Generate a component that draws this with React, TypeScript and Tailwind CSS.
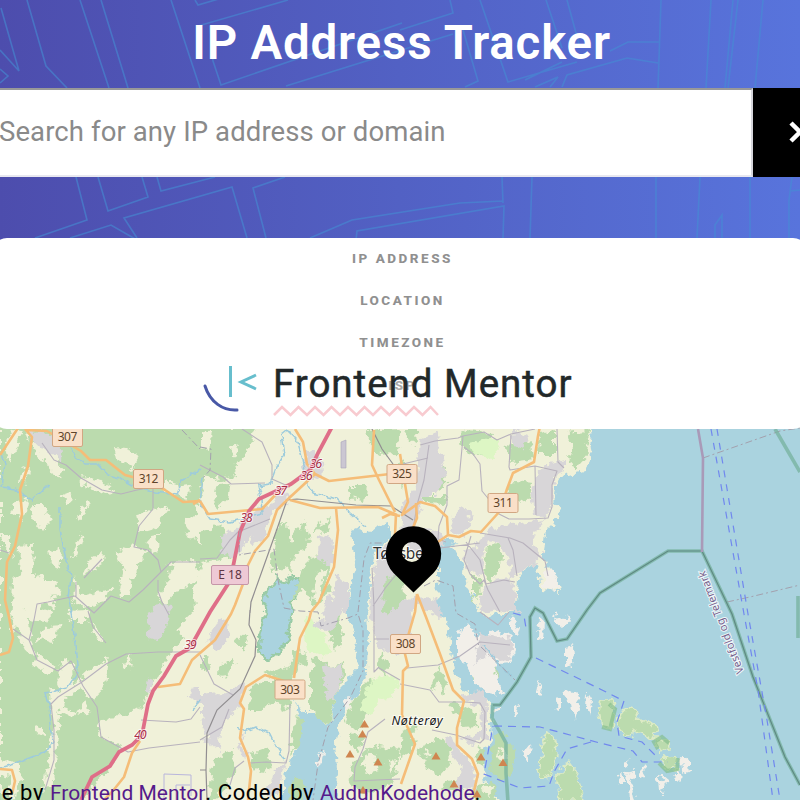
import React from "react";

const roadNumbers = [
  { t: "307", x: 67.500, y: 437 },
  { t: "312", x: 148.500, y: 479 },
  { t: "325", x: 402, y: 474 },
  { t: "311", x: 503, y: 503 },
  { t: "308", x: 405.500, y: 644 },
  { t: "303", x: 290, y: 689.500 },
];

const exits = [
  { t: "36", x: 316, y: 463.500 },
  { t: "36", x: 306.500, y: 475.500 },
  { t: "37", x: 281, y: 490.500 },
  { t: "38", x: 246.500, y: 517.500 },
  { t: "39", x: 190.500, y: 644.500 },
  { t: "40", x: 140.500, y: 734 },
];

const peaks = [
  [364.500, 724], [362.500, 734], [350, 754], [378, 762], [436, 756], [481, 757],
  [503, 762.500], [454, 784], [363, 790], [477, 794],
];

const mapFont = "font-['Noto_Sans',sans-serif]";

function HeaderLines() {
  return (
    <svg className="absolute inset-0 h-[330px] w-[800px]" viewBox="0 0 800 330" fill="none" stroke="#448fd4" strokeWidth="1.6" opacity=".58">
      <path d="M1 8L19 71L0 50M0 83L8 76L0 69M27 0L46 66L67 88M80 0L109 88M101 0L128 88M171 0L200 88M195 0L198 5L222 -2M198 26L288 0M210 26L213 61L221 85L402 23M286 86L453 34M450 0L453 13L400 30M480 0L508 82L577 62M463 30L478 81L465 87M546 0L562 48M567 0L579 44M562 62L525 80M562 87L567 75L627 58L658 63M610 51L628 42H660M661 0L658 88M711 0L706 88M733 0L725 88M738 0L728 88M763 0L755 88M535 87L558 77L550 87" />
      <path d="M76 177L87 220L35 238M98 177L108 211L148 197L142 177M157 177L161 191L215 177M70 238L111 225L137 240M137 238L124 218L232 187L247 238M266 238L253 188L285 177M310 238L352 220L460 203L503 201M356 240L357 231L504 206L503 238M502 177L503 203M532 177L530 238M656 177V238M700 177L697 238M750 177V238M792 177L789 200V238M800 190L790 191M715 238L715 225L722 215V238" />
    </svg>
  );
}

function Sea() {
  return (
    <g fill="#aad3df">
      <path d="M593 425L589 443L591 458L587 472L567 475L557 480L554 503L560 507L555 522L545 532L543 555L547 568L557 578L559 592L542 590L535 562L518 578L517 592L515 613L503 613L490 616L480 614L475 602L467 588L463 565L450 538L438 542L438 575L437 614L447 622L450 642L455 670L463 690L490 700L492 743L481 751L487 787L500 800V810H810V425Z" />
      <path d="M350 532L358 528L368 534L375 528L390 523V538L373 552L371 572L367 614L368 630L367 670L360 690L345 708L340 720L335 743L337 770L335 805H283V790L287 767L297 750L302 727L297 710L295 700L303 713L317 713L328 727L338 690L355 673L357 637L348 617V600L352 578L357 558Z" />
      <path d="M265 592L275 583L278 577L283 582L290 577L300 580L298 590L292 605L291 620L287 643L275 655L268 661L260 655L259 640L265 615L263 600Z" stroke="#9acba6" strokeWidth="3" />
      <path d="M41 465L55 478L62 492L60 505L52 500L47 487ZM133 657L145 655L153 661L144 665ZM83 490L101 499L91 496Z" />
    </g>
  );
}

function Land() {
  return (
    <>
      <g fill="#bbdbae">
        <path d="M0 425H222L230 435L245 432L249 450L234 465L236 476L220 480L205 475L199 500L192 523L215 545L229 540L230 557L203 562L193 590L195 610L176 630L185 637L169 656L154 680L146 704L122 718L98 720L101 736L122 746L109 770L97 779L79 804H0Z" />
        <path d="M218 430L255 427L248 449L234 467L218 453ZM217 484L230 483L227 500L217 509L214 497ZM198 532L226 525L229 550L204 560ZM276 529L287 521L289 544L305 521L309 540L302 552L292 556L290 574L282 567L270 572L274 548ZM312 531L331 518L329 532ZM310 557L334 552L326 580L333 590L315 606L302 588L290 605L303 570ZM350 486H366L364 502L351 498ZM365 430L400 428L397 454L376 455ZM392 478L402 461L409 468L403 488ZM424 496H447L445 505L424 504ZM436 464L446 468L445 486L436 491ZM404 429H416L417 446L409 442ZM464 430L493 432L483 457L468 455L459 443ZM507 444L532 441L534 459L511 462ZM507 492L516 480L532 482L530 499L518 502ZM539 433L555 430V454H538ZM566 432L590 430L585 448L589 455L574 472L569 459L573 448ZM487 546L502 542L500 566L490 581L484 572ZM473 577L482 577L480 593L473 602Z" />
        <path d="M314 658L331 666L344 662L345 674L338 691L333 707L328 726L310 708V680ZM264 673L293 666L292 651L300 646L296 674L285 682ZM250 686L264 681H285L291 711L273 702L260 712H249ZM296 715L303 722L300 746L290 755ZM294 776L304 782L302 800H287ZM248 755L266 748L272 762L266 776L251 768ZM213 760L235 748L234 775L216 799H208ZM367 682L377 678L371 707L359 730L345 722L351 704ZM349 734L360 733L365 740L358 751L350 745ZM352 763L374 745L400 749L393 782L364 796L349 786ZM418 750L441 736L449 746L450 764L439 776L428 768ZM402 730L416 725L411 752L400 760ZM450 703L477 711L476 728L464 729L457 718ZM472 675L491 666L499 672L495 689L484 690L472 680ZM478 746L485 750L482 766L476 762ZM494 738L504 731L507 745L516 748L512 772L504 781L491 775L492 750ZM475 788L492 780L498 803H472ZM438 786L457 778L464 785L457 793ZM440 667L447 684L444 693L438 680L433 692L431 680ZM383 570L402 565L405 612L382 613ZM380 650L387 663L386 679L379 667Z" />
        <path d="M548 732L556 740L557 757L550 779L538 774L542 745ZM568 761L575 770L580 785L583 802H560L557 775ZM601 700L612 700L615 714L612 728L602 725L599 712ZM620 713L632 707L639 719L656 725L658 732L654 738L639 732L629 735L617 729ZM655 739L666 739L670 749L658 751ZM665 757L676 758L678 769L668 771L662 764Z" stroke="#ddebc5" strokeWidth="1.5" />
        <path d="M236 640L245 633L250 644L241 651ZM220 663L234 660L229 675L219 676ZM201 655L211 662L208 672L201 669ZM324 620L340 616L344 640L335 650ZM298 650L308 657L306 668L298 664Z" />
      </g>
      <g fill="#f0f1d9">
        <path d="M11 429L22 430L15 453L9 462L5 449ZM33 445L46 444L52 452L62 468L60 480L47 463L38 457ZM20 470L30 467L27 481L18 485ZM24 435L29 430L27 442ZM114 447L126 448L139 457L132 470L117 460ZM80 476L102 481L116 491L105 495L83 484ZM62 495L73 491L76 501L66 506ZM14 504L27 500L23 520L11 511ZM31 505L44 505L50 523L43 533L34 522ZM0 533L9 533L12 556L4 547ZM20 547L34 544L33 573L51 583L56 610L43 603L37 621L24 607L23 629L11 630L13 580L19 574ZM48 549L61 551L59 568L50 563ZM78 537L84 534L77 557L71 558ZM87 503L90 502L82 519L77 517ZM91 558L103 552L102 565L83 576ZM116 552L133 546L147 550L140 562L128 596L118 596L124 570ZM137 514L156 508L170 509L156 528L139 533ZM187 520L200 518V544L191 538L184 526ZM172 562L196 561L200 579L178 590L166 603L158 599L167 581ZM148 535L158 534L157 550L150 555ZM164 481L180 486L193 485L187 499L164 493ZM37 579L54 582L63 594L47 597ZM76 577L82 596L111 587L105 603L83 608L72 596Z" />
        <path d="M14 612L34 607L52 612L46 622L28 620L35 655L28 654L18 634ZM46 626L61 625L52 643L37 640ZM67 611L84 610L96 631L106 642L95 638L90 621L70 621ZM36 651L57 668L48 673L35 666ZM62 661L73 662L74 686L92 669L109 657L106 684L95 699L81 689L62 697L57 684ZM49 688L67 697L60 712L73 718L86 700L89 715L73 712L59 708ZM50 694L64 693L60 716L54 762L56 780L43 791L49 754L53 724ZM35 728L43 726L43 736L35 734ZM0 757L14 763L21 774L16 799L10 800L11 777L0 775ZM126 659L132 653L128 671L124 668ZM100 718L123 717L130 731L146 717L144 702L151 690L162 694L169 681L180 679L175 693L188 712L185 721L197 735L171 743L194 749L173 753L168 775L151 779L142 764L131 771L119 752L128 748L99 736Z" />
        <path d="M202 430L211 433L209 450L202 447ZM229 447L239 445L235 455ZM317 572L325 569L320 593L313 603ZM350 500L357 498L356 505H350ZM490 533L504 542L499 533ZM368 753L379 757L372 764L380 770L368 773L361 766ZM387 763L396 759L390 774ZM426 748L431 755L424 758ZM502 746L506 755L499 760ZM487 785L492 788L490 796L482 791Z" />
      </g>
      <g fill="#f2efe9">
        <path d="M544 574L550 568L558 580L557 592L544 588ZM566 648L573 646L574 655L571 667L566 660ZM539 617L543 620L542 643L538 639ZM537 685L540 682L539 696L536 693ZM556 703L561 698L561 711L557 710ZM565 688L571 692L575 689L580 703L575 719L572 706L568 705L564 697ZM587 693L592 701L590 717L586 708ZM513 707L519 705L517 716L513 714ZM525 750L530 744L532 749L527 761L524 758ZM494 707L501 708L498 713L494 712ZM617 777L623 772L625 784L620 784ZM625 763L628 759L629 766L625 767ZM642 765L647 770L644 778L641 773ZM627 772L636 770L632 783L636 803L629 800ZM659 775L667 782L660 794ZM681 755L689 762L690 770L682 772ZM675 770L682 777L680 782L675 777ZM318 750L323 753L321 767L316 760ZM343 701L349 696L352 703L346 709ZM553 612L557 618L565 619L567 615L570 620L563 629L556 623Z" />
        <path d="M457 635L467 624L478 638L495 629L513 637L516 651L510 664L500 665L495 670L501 690L496 697L475 684L465 662L457 660ZM510 622L515 616L519 627L516 636L510 631Z" />
      </g>
      <g fill="#d8d6d8">
        <path d="M26 430L53 434L62 448L61 463L49 452L37 445ZM305 451L321 454L323 474L317 480L303 474ZM274 494L286 491L289 499L277 504ZM275 500L289 502L272 516L260 544L250 545L255 520ZM221 538L264 505L270 509L244 545L237 557L222 555ZM420 440L438 432L440 453L447 474L435 495H424L415 526L440 533L443 550L438 564L420 562L400 536L402 505L416 487ZM378 550L394 540L401 568L384 584L383 613L415 596L438 600L442 620L433 613L415 604L405 640L405 654L379 650L371 620L370 594ZM454 518L461 506L472 518L462 536L450 530ZM470 552L493 527L500 543L487 539L480 576L466 570L463 550ZM490 527L536 521L541 520L533 545L543 556L534 564L512 578L504 548ZM490 580L513 578L517 614L499 610L482 613L479 596ZM512 429L528 435L522 451L513 446ZM549 463L565 460L565 471L554 477L552 509L542 520L534 515L531 495L538 472ZM319 535L334 539L332 567L318 557ZM336 575L348 581V614L333 598ZM328 597L347 602L331 632L319 628ZM481 633L512 639L511 660L500 661L487 655L475 665L478 650ZM224 693L244 684L242 702L221 728L220 751L209 744L201 718V703ZM200 695L220 693L214 707L200 705ZM322 667L342 664L341 681L334 702L326 693ZM245 733L240 748L249 753L243 760L237 742ZM273 770L285 762L278 795H268ZM310 625L326 618L326 626L320 630ZM151 612L169 612L165 630L157 641L147 638ZM148 678L153 679L151 695L146 690ZM191 688L200 686V706L190 696ZM154 605L169 602L171 615H148ZM460 697L484 690L487 708V739L469 744L460 739L480 730L481 708ZM445 735L456 742L477 775L475 790L454 785L462 765L448 748ZM400 610L410 607L413 644L405 651L400 639ZM209 629L229 616L227 640L217 652L210 645Z" />
      </g>
      <g fill="#ddf6c4">
        <path d="M470 443L494 438L499 447L494 457L475 455ZM305 618L323 633L332 651L324 657L307 650L303 634ZM371 680L390 674L400 683L392 697L378 700L371 713L360 711Z" />
      </g>
    </>
  );
}

function Waterways() {
  return (
    <g fill="none" stroke="#9dcbdc" strokeWidth="1.500" strokeLinejoin="round">
      <path d="M0 452L5 463L2 487L15 489L32 500L40 493L48 485M70 445L77 458L84 464L98 464L108 475L120 478L133 485L155 492L177 495L182 480L200 469M60 507L60 529L66 560L71 576L69 600L73 627L78 673L67 688L45 693L49 708L53 742L47 751L14 764L0 768" />
      <path d="M203 477L200 504L210 519L230 522L262 514L261 498L258 486L270 484L276 468L284 455L281 435L287 430L297 440L303 460L307 482L313 493L337 499L349 512L366 527" />
      <path d="M237 727L244 732L256 727L269 733L275 745L284 758M483 645L512 678M200 700L192 710" />
    </g>
  );
}

function Roads() {
  return (
    <>
      <g fill="none" stroke="#b8b2bd" strokeWidth="1.1" strokeLinejoin="round">
        <path d="M42 443L54 460L66 465L81 478L102 490L121 494L137 490L153 487L153 509L139 526L134 547L148 550L158 560L161 572L171 562H200M161 572L143 590L129 602L111 596L94 613L75 596L48 602L37 604L34 620L29 640L37 660L58 671L71 661L83 686L97 707L101 737L128 752L149 748L200 742M158 580L158 591L162 602L169 615M200 652H158L126 654L106 664L82 682L58 697L51 704L54 730L54 760L45 790M141 720L176 722L191 719L200 707M76 582L76 597M84 578L102 559M13 629L29 640M0 550L9 553M88 611L93 627L106 643" />
        <path d="M242 429L262 442L272 465L272 479L290 487M200 465L223 477L231 484L265 483M200 559L217 558L230 540L238 532L270 519M200 655L214 684L233 695M200 740L222 727L229 709M290 704L289 751L286 763L266 762L250 763M230 785L235 768L244 761M420 445L435 441L458 438L463 436L462 448L459 480L447 486L447 505L439 526L438 539L446 542M429 445L424 480L417 505L413 530M403 464L428 458M464 447L473 454L480 464L482 491L496 508M463 436L484 432L497 440L511 434L535 429M511 435L509 467L510 470L535 466L557 471L552 485V507L548 518L529 519L509 519L497 513M535 466L536 515M557 429L558 462L564 468M480 533L510 538L523 543L545 561L548 576M471 536L464 560L470 574L480 584L484 580L488 590L500 612M466 542L480 560L486 584L504 580L515 582M508 538L513 550L517 576M372 568L374 606L374 672L379 667M374 639H389M379 668L400 680M407 668L438 665L460 656L480 642L510 645M400 684L430 690L439 702L465 702L480 703L485 712L484 739L480 743L456 735L432 730M385 719L368 732L363 749L355 767L354 781L400 779M400 570L386 587L373 606M480 612L498 625L509 612M440 548L480 543" />
        <path d="M164 800V774L191 775V796M176 800V785H190" stroke="#b9b6dc" strokeWidth="1" />
      </g>
      <path d="M370 425L382 449L393 464M250 613L251 602L277 529L287 500L297 499L356 505L391 506L413 520M250 610L249 625L256 640L255 656L240 689L217 710L207 733L206 770L207 800M200 770H206" fill="none" stroke="#918e91" strokeWidth="1.2" />
      <g fill="none" strokeLinejoin="round" stroke="#f5bd78" strokeWidth="2.600">
        <path d="M0 455L20 425M25 429L32 437L28 466L20 490L22 514L15 546L7 562L5 600L9 617L13 638L9 652L0 655M27 430L47 431L81 451L90 460L106 460L125 475L151 482L165 490L183 502L200 501" />
        <path d="M295 429L303 442L307 464L315 474L329 481L390 474M315 474L300 488L287 500L277 510L268 536L255 551L248 565L246 576L235 605L231 614L215 640L192 660L180 684L158 687" />
        <path d="M290 500L320 508L378 507L397 515M336 508L338 530L334 567L319 602L311 612L309 620L300 638L297 657L294 678M200 501L208 514L262 509L280 490M396 514L395 535M374 430L372 465L379 480L395 512M400 454L408 502L402 515L420 502L435 506L447 517L448 535L459 537L471 531L481 532L500 511L507 489L513 473L534 462L538 436L540 426M416 503L417 518L412 530M448 535L435 544" />
        <path d="M417 594L415 612L404 650L408 666L403 671L402 715L415 744L401 784M417 594L426 617L440 654L453 690L464 701L457 728L457 745L472 759L478 774L473 795M290 683L265 675L246 687L240 703L244 709L240 738L248 757L251 771L248 800M140 741L132 753L124 777L112 792L104 800M0 769L12 770L15 781L12 794M400 516L390 514L382 518M200 500L193 504" />
      </g>
      <path d="M333 425L318 453L310 470L291 484L259 499L249 511L240 532L234 562L230 581L210 612L190 648L176 656L164 676L153 691L148 704L142 735L132 745L119 752L110 766L92 777L81 800" fill="none" stroke="#df6e88" strokeWidth="3.800" />
    </>
  );
}

function Boundaries() {
  return (
    <g fill="none">
      <g stroke="#a3a0ad" strokeWidth="1" strokeDasharray="7 3 2 3">
        <path d="M182 430L200 449M200 447L211 449L210 470L203 478M240 530L239 555L274 549L278 580L284 608L300 611L318 612L321 626L348 618L358 614L363 630L363 671L350 698L328 727L318 764L313 800M358 612L364 559L370 543L382 543M424 586L436 580L453 586L456 613L475 624L478 644L515 680M703 458L780 431L800 428M727 602L750 597L800 585" />
      </g>
      <path d="M508 802L506 773L506 743L500 732L492 718L493 705H500L517 682L531 657L530 617L535 608L543 613L557 641L567 639L587 610L600 593L668 551H702L732 614L753 677L785 757L800 785M775 429L800 472M798 596V638" stroke="#76b19d" strokeWidth="3.600" opacity=".75" />
      <path d="M493 705H500L517 682L531 657L530 617L535 608L543 613L557 641L567 639L587 610L600 593L668 551H702L732 614L753 677L785 757L800 785" stroke="#5f8983" strokeWidth="1.200" />
      <path d="M698 429L703 458L702 552" stroke="#a99ab8" strokeWidth="2.600" />
      <g stroke="#7188ee" strokeWidth="1.200">
        <path d="M711 429L744 614L758 690L773 800" strokeDasharray="7 7" />
        <path d="M717 429L748 614L767 720L780 800" strokeDasharray="7 7" />
        <path d="M513 613L524 616L526 628M536 658L600 689L624 701L617 722L619 736L642 742L655 755M494 726L540 727L600 743L633 751L642 762H668M591 742L567 749L554 772L549 786L520 788L484 774L493 726" strokeDasharray="8 6" />
      </g>
      <path d="M609 704L615 709L610 729L602 727M658 749L654 742L662 737L669 743M659 763L667 771L677 769L678 758" stroke="#82bd8b" strokeWidth="4" opacity=".65" />
    </g>
  );
}

function TownMap() {
  return (
    <svg className="block h-[470px] w-[800px] shrink-0" viewBox="0 330 800 470">
      <defs>
        <filter id="rough" x="-5%" y="-5%" width="110%" height="110%" colorInterpolationFilters="sRGB">
          <feTurbulence type="fractalNoise" baseFrequency=".13" numOctaves="3" seed="7" result="n" />
          <feDisplacementMap in="SourceGraphic" in2="n" scale="12" xChannelSelector="R" yChannelSelector="G" />
        </filter>
        <filter id="wobble" x="-5%" y="-5%" width="110%" height="110%" colorInterpolationFilters="sRGB">
          <feTurbulence type="fractalNoise" baseFrequency=".15" numOctaves="2" seed="3" result="n" />
          <feDisplacementMap in="SourceGraphic" in2="n" scale="6" xChannelSelector="R" yChannelSelector="G" />
        </filter>
      </defs>
      <rect y="330" width="800" height="470" fill="#f0f1d9" />
      <g filter="url(#rough)">
        <Sea />
        <Land />
      </g>
      <g filter="url(#wobble)"><Waterways /></g>
      <path d="M341 442L346 440V468H341Z" fill="#cbc7d2" stroke="#aaa5bb" strokeWidth=".6" />
      <Roads />
      <Boundaries />
      {peaks.map(([x, y]) => (
        <path key={`${x}-${y}`} d={`M${x - 4.500} ${y + 3.500}L${x} ${y - 4}L${x + 4.500} ${y + 3.500}Z`} fill="#cf8650" />
      ))}
      {roadNumbers.map(({ t, x, y }) => (
        <g key={t}>
          <rect x={x - 15} y={y - 9.500} width="30" height="19" rx="1.500" fill="#fae0c8" stroke="#d1a783" />
          <text x={x} y={y + 4.200} textAnchor="middle" textLength="19.500" className={`${mapFont} text-[12px]`} fill="#5f452b">{t}</text>
        </g>
      ))}
      <rect x="211.500" y="565.500" width="37" height="19" rx="1.500" fill="#eec9d5" stroke="#c596a8" />
      <text x="230" y="579.300" textAnchor="middle" className={`${mapFont} text-[12px]`} fill="#5d3543">E 18</text>
      {exits.map(({ t, x, y }) => (
        <text key={`${t}-${y}`} x={x} y={y + 4.500} textAnchor="middle" textLength="12.500" className={`${mapFont} text-[12.5px] italic`} fill="#a92f48" stroke="#fff" strokeOpacity=".7" strokeWidth="2" paintOrder="stroke">{t}</text>
      ))}
      <text x="373" y="559" textLength="66" className={`${mapFont} text-[15.500px]`} fill="#333" stroke="#fff" strokeOpacity=".8" strokeWidth="2" paintOrder="stroke">Tønsberg</text>
      <text x="391.500" y="724.500" textLength="51" className={`${mapFont} text-[12.5px] italic`} fill="#1a1a1a" stroke="#fff" strokeOpacity=".7" strokeWidth="2" paintOrder="stroke">Nøtterøy</text>
      <text transform="translate(744 672) rotate(-111)" textLength="109" className={`${mapFont} text-[11px]`} fill="#77628d" stroke="#fff" strokeOpacity=".8" strokeWidth="2" paintOrder="stroke">Vestfold og Telemark</text>
      <path fillRule="evenodd" d="M413.500 592.500L393.500 573A27.700 27.700 0 1 1 433.500 573ZM412 542A10 10 0 1 0 412 562A10 10 0 1 0 412 542Z" />
    </svg>
  );
}

function MentorLogo() {
  return (
    <svg className="absolute left-[200px] top-[122px] h-[60px] w-[380px]" viewBox="200 360 380 60" fill="none">
      <path d="M205 386C210 402 223 411 237 410" stroke="#4858a6" strokeWidth="3" strokeLinecap="round" />
      <path d="M230.500 366V397M256 375L241 382L256 389" stroke="#67becd" strokeWidth="3" />
      <text x="273" y="397" textLength="301" lengthAdjust="spacing" className="font-['Roboto',sans-serif] text-[38.500px] font-normal" fill="#222829" stroke="#222829" strokeWidth=".5">Frontend Mentor</text>
      <path d="M274 415L282 407L290.500 415L298.500 407L307 415L315 407L323.500 415L331.500 407L340 415L348 407L356.500 415L364.500 407L373 415L381 407L389.500 415L397.500 407L406 415L414 407L422.500 415L430.500 407L438 415" stroke="#f8cbd0" strokeWidth="2.500" />
    </svg>
  );
}

export default function App() {
  return (
    <main className="relative flex h-[800px] w-[800px] flex-col overflow-hidden bg-[#aad3df] font-['Roboto',sans-serif]">
      <header className="relative z-10 h-[330px] shrink-0 bg-linear-to-r from-[#4d4dad] via-[#5261c4] to-[#5874dc]">
        <HeaderLines />
        <div className="relative flex flex-col">
          <h1 className="h-[88px] whitespace-nowrap pl-[3px] pt-[13px] text-center text-[47.500px] font-semibold leading-[60px] tracking-[0.8px] text-white">IP Address Tracker</h1>
          <form className="-ml-12 flex h-[89px] w-[896px]">
            <input className="w-[801px] border-2 border-t-[#999] border-r-[#d6d6dc] border-b-[#e8e8f0] border-l-[#999] bg-white pb-[2px] pl-[45px] text-[27.500px] tracking-[0.1px] placeholder:text-[#8a8a8a]" placeholder="Search for any IP address or domain" />
            <button type="button" aria-label="Search" className="flex w-[95px] items-center bg-black pl-[36px]">
              <svg className="h-[24px] w-[16px]" viewBox="0 0 16 24" fill="none"><path d="M2 2L11 11L2 20" stroke="#fff" strokeWidth="4.500" /></svg>
            </button>
          </form>
          <section className="relative -mx-2 mt-[61px] flex h-[191px] flex-col items-center rounded-[15px] bg-white pl-[5px] pt-[9px] text-[13.500px] font-extrabold tracking-[2.500px] text-[#909090]">
            <h2 className="h-[42px] leading-[22px]">IP ADDRESS</h2>
            <h2 className="h-[42px] leading-[22px]">LOCATION</h2>
            <h2 className="h-[43px] leading-[22px]">TIMEZONE</h2>
            <h2 className="leading-[22px] text-[#aaa]">ISP</h2>
            <div className="absolute left-2 top-0"><MentorLogo /></div>
          </section>
        </div>
      </header>
      <TownMap />
      <footer className="absolute right-[319px] top-[779px] whitespace-nowrap text-[22px] leading-[28px] tracking-[0.6px] text-black">
        Challenge by <a className="text-[21px] tracking-normal text-[#551a8b]">Frontend Mentor</a>. Coded by <a className="text-[21px] tracking-normal text-[#551a8b]">AudunKodehode</a>.
      </footer>
    </main>
  );
}
